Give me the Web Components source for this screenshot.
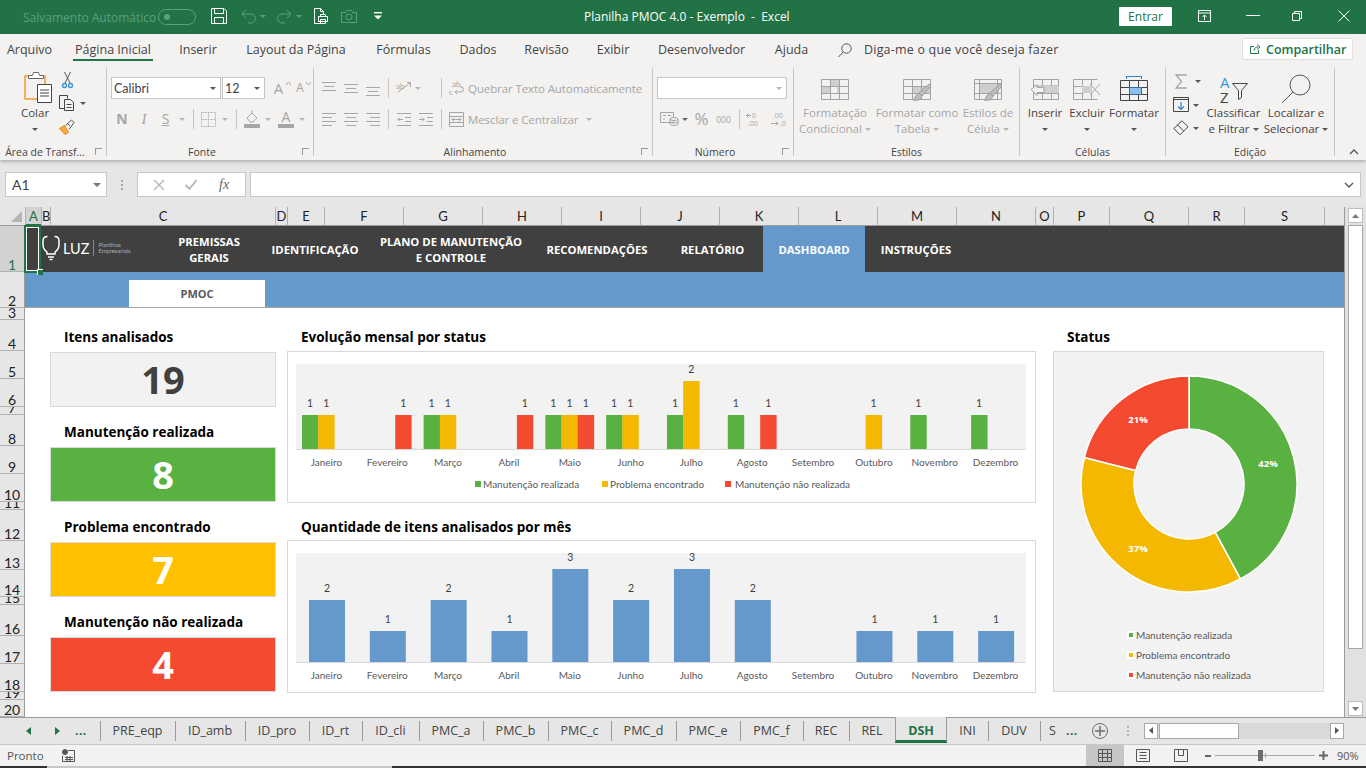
<!DOCTYPE html>
<html lang="pt-BR">
<head>
<meta charset="utf-8">
<title>Planilha PMOC 4.0 - Exemplo - Excel</title>
<style>
  html, body { margin: 0; height: 100%; overflow: hidden; }
  body {
    display: flex; flex-direction: column; width: 1366px; height: 768px;
    background: #e6e6e6; font-family: "Open Sans", "Liberation Sans", sans-serif; color: #444;
  }
</style>
</head>
<body>
<xl-titlebar></xl-titlebar>
<xl-menu></xl-menu>
<xl-ribbon></xl-ribbon>
<xl-formula></xl-formula>
<xl-sheet></xl-sheet>
<xl-tabs></xl-tabs>
<xl-status></xl-status>

<script>
const GREEN = '#58b140', YELLOW = '#f4b800', RED = '#f44a30', BLUE = '#6598cb';
const MONTHS = ['Janeiro','Fevereiro','Março','Abril','Maio','Junho','Julho','Agosto','Setembro','Outubro','Novembro','Dezembro'];

// shared bits of the ribbon
const sharedCss = `
  .row { display: flex; align-items: center; }
  .dd { display: inline-block; width: 0; height: 0; border-left: 3px solid transparent; border-right: 3px solid transparent; border-top: 3px solid var(--dd, #777); flex: none; }
  .dim { --dd: #b5b5b5; }
  .sep { width: 1px; height: 20px; background: #c8c6c4; flex: none; }
  svg { display: block; flex: none; overflow: visible; }
`;

function ln(w, h, list, color) {
  const body = list.map(l => `<path d="M${l[0]} ${l[1]}H${l[2]}"/>`).join('');
  return `<svg width="${w}" height="${h}" stroke="${color}" fill="none">${body}</svg>`;
}

class XlTitlebar extends HTMLElement {
  connectedCallback() {
    this.attachShadow({ mode: 'open' });
    this.shadowRoot.innerHTML = `
      <style>
        ${sharedCss}
        :host { display: flex; align-items: center; height: 34px; padding-bottom: 2px; box-sizing: border-box; background: #217346; color: #fff; flex: none; font-size: 12px; }
        .auto { margin: 2px 0 0 23px; width: 130px; color: #5c9f7d; white-space: nowrap; }
        .toggle { margin: 2px 0 0 5px; width: 36px; height: 14px; border: 1px solid #5c9f7d; border-radius: 8px; display: flex; align-items: center; }
        .toggle i { display: block; width: 6px; height: 6px; margin-left: 5px; border-radius: 50%; background: #5c9f7d; }
        .title { margin-left: 202px; width: 197px; white-space: pre; text-align: center; }
        .enter { margin: 1px 0 0 338px; width: 53px; height: 19px; background: #fff; color: #217346; line-height: 20px; text-align: center; border-radius: 1px; }
      </style>
      <span class="auto">Salvamento Automático</span>
      <span class="toggle"><i></i></span>
      <svg style="margin-left:15px" width="16" height="16" fill="none" stroke="#fff"><path d="M.5.5h12.5l2.5 2.500v12.500H.5z"/><path d="M3.500.5v5h9v-5M3.500 15.500v-6h9v6"/></svg>
      <svg style="margin-left:14px" width="15" height="15" fill="none" stroke="#5c9f7d"><path d="M1 5l4-4M1 5l4 4M1 5h9a4.500 4.500 0 0 1 0 9H7"/></svg>
      <span class="dd" style="--dd:#5c9f7d;margin-left:4px"></span>
      <svg style="margin-left:11px" width="15" height="15" fill="none" stroke="#5c9f7d"><path d="M14 5l-4-4M14 5l-4 4M14 5H5a4.500 4.500 0 0 0 0 9h3"/></svg>
      <span class="dd" style="--dd:#5c9f7d;margin-left:4px"></span>
      <svg style="margin-left:12px" width="14" height="16" fill="none" stroke="#fff"><path d="M7 15.500H.5V.5h6l3 3v3M6.500.5v3h3"/><path fill="#217346" d="M4.500 8.500h9v5h-9zM6.500 8.500v-2h5v2M6.500 11.500h5v4h-5z"/></svg>
      <svg style="margin-left:13px" width="16" height="13" fill="none" stroke="#5c9f7d"><path d="M.5 2.500h4l1-2h5l1 2h4v10H.5z"/><circle cx="8" cy="7" r="3"/></svg>
      <svg style="margin-left:17px" width="8" height="8" fill="#fff"><rect width="8" height="1.400" y="0"/><path d="M0 3.500h8L4 7.500z"/></svg>
      <span class="title">Planilha PMOC 4.0 - Exemplo  -  Excel</span>
      <span class="enter">Entrar</span>
      <svg style="margin-left:26px" width="13" height="12" fill="none" stroke="#fff"><path d="M.5.500h12v11H.5zM.5 3h12M6.500 10V5M4.500 7l2-2 2 2"/></svg>
      <svg style="margin-left:35px" width="14" height="2" stroke="#fff"><path d="M0 .5h14"/></svg>
      <svg style="margin-left:32px" width="10" height="10" fill="none" stroke="#fff"><path d="M.5 2.500h7v7h-7zM2.500 2.500v-2h7v7h-2"/></svg>
      <svg style="margin-left:36px" width="12" height="12" stroke="#fff"><path d="M.5.500l11 11M11.500.500l-11 11"/></svg>
    `;
  }
}

class XlMenu extends HTMLElement {
  connectedCallback() {
    const tabs = [['Arquivo',0,59],['Página Inicial',14,80,1],['Inserir',15,60],['Layout da Página',12,112],['Fórmulas',13,77],['Dados',3,66],['Revisão',4,63],['Exibir',7,56],['Desenvolvedor',9,103],['Ajuda',12,53]];
    this.attachShadow({ mode: 'open' });
    this.shadowRoot.innerHTML = `
      <style>
        ${sharedCss}
        :host { display: flex; align-items: stretch; height: 33px; background: #f3f2f1; flex: none; font-size: 12.5px; color: #444; }
        .tab { text-align: center; line-height: 32px; white-space: nowrap; height: 27px; box-sizing: border-box; }
        .tab.on { border-bottom: 2px solid #217346; }
        .ask { margin-left: 12px; line-height: 32px; white-space: nowrap; letter-spacing: .2px; }
        .share { margin-left: auto; margin-right: 13px; margin-top: 4px; width: 111px; height: 22px; background: #fff; border: 1px solid #e1dfdd; border-radius: 2px; box-sizing: border-box; display: flex; align-items: center; color: #217346; font-weight: 600; font-size: 12.5px; }
        .share svg { margin: 0 5px 0 7px; }
      </style>
      ${tabs.map(t => `<span class="tab ${t[3] ? 'on' : ''}" style="margin-left:${t[1]}px;width:${t[2]}px">${t[0]}</span>`).join('')}
      <svg style="margin:9px 0 0 20px" width="14" height="15" fill="none" stroke="#555"><circle cx="8.500" cy="5.500" r="4.700"/><path d="M5 9l-4.500 5"/></svg>
      <span class="ask">Diga-me o que você deseja fazer</span>
      <span class="share">
        <svg width="11" height="10" viewBox="0 0 11 10" fill="none" stroke="#217346"><path d="M4 2.500H.5v7h8V6M4 6.500c0-2.500 2-3.500 4-3.500M7 .5l3 2.500-3 2.500"/></svg>
        Compartilhar
      </span>
    `;
  }
}

class XlRibbonGroup extends HTMLElement {
  connectedCallback() {
    const launcher = this.hasAttribute('launcher');
    this.attachShadow({ mode: 'open' });
    this.shadowRoot.innerHTML = `
      <style>
        :host { display: flex; flex: none; height: 93px; box-sizing: border-box; position: relative; }
        .in { flex: 1; min-width: 0; display: flex; flex-direction: column; }
        .body { flex: 1; min-height: 0; }
        .foot { height: 19px; line-height: 22px; font-size: 10.500px; color: #444; text-align: center; padding-right: ${launcher ? 16 : 0}px; display: flex; justify-content: center; white-space: nowrap; box-sizing: border-box; }
        .line { width: 1px; background: #c8c6c4; margin: 1px 0 4px; flex: none; }
        .launch { position: absolute; right: 5px; bottom: 5px; width: 7px; height: 7px; border-left: 1px solid #9a9a9a; border-top: 1px solid #9a9a9a; box-sizing: border-box; }
      </style>
      <div class="in"><div class="body"><slot></slot></div><div class="foot">${this.getAttribute('label')}</div></div>
      ${launcher ? '<span class="launch"></span>' : ''}
      <div class="line"></div>
    `;
    this.style.width = this.getAttribute('w') + 'px';
  }
}

class XlBigBtn extends HTMLElement {
  connectedCallback() {
    const dim = this.hasAttribute('dim');
    const color = dim ? '#a6a6a6' : '#444';
    const l2 = this.getAttribute('l2') || '';
    this.attachShadow({ mode: 'open' });
    this.shadowRoot.innerHTML = `
      <style>
        :host { display: flex; flex-direction: column; align-items: center; flex: none; font-size: 11.500px; color: ${color}; --dd: ${dim ? '#b5b5b5' : '#555'}; white-space: nowrap; }
        .ico { height: 33px; padding-top: 5px; display: flex; align-items: center; justify-content: center; }
        .t { height: 16px; line-height: 16px; display: flex; align-items: center; justify-content: center; }
        .dd { display: inline-block; width: 0; height: 0; border-left: 3px solid transparent; border-right: 3px solid transparent; border-top: 3px solid var(--dd); margin-left: ${l2 ? 3 : 0}px; }
      </style>
      <div class="ico"><slot></slot></div>
      <div class="t">${this.getAttribute('l1')}</div>
      <div class="t">${l2}<span class="dd"></span></div>
    `;
  }
}

class XlRibbon extends HTMLElement {
  connectedCallback() {
    const g = '#a6a6a6';
    const tbl = (body, s) => `<svg width="30" height="24" viewBox="0 0 30 24" fill="none" stroke="${s || '#a3a3a3'}">${body}</svg>`;
    const grid = `<path d="M1.500 2.500h27v20h-27zM1.500 9.500h27M1.500 16.500h27M10.500 2.500v20M19.500 2.500v20"/>`;
    const brush = `<path fill="#bdbdbd" stroke="#9e9e9e" d="M27 7l2 2-9 10-3-3zM17 16l3 3c-1 4-5 5-9 4 2-2 3-6 6-7z"/>`;
    this.attachShadow({ mode: 'open' });
    this.shadowRoot.innerHTML = `
      <style>
        ${sharedCss}
        :host { display: flex; height: 93px; background: #f3f2f1; flex: none; box-shadow: 0 2px 3px rgba(0,0,0,.22); position: relative; font-size: 11.500px; color: #a6a6a6; }
        .select { background: #fff; border: 1px solid #c6c6c6; height: 22px; box-sizing: border-box; display: flex; align-items: center; color: #444; font-family: Lato, "Open Sans", sans-serif; font-size: 12.5px; flex: none; }
        .select span { flex: 1; padding-left: 2px; }
        .select .dd { flex: none; margin-right: 4px; --dd: #555; }
        .r1 { padding-top: 10px; height: 22px; }
        .r2 { margin-top: 10px; height: 20px; }
        .g { color: #a6a6a6; white-space: nowrap; letter-spacing: -.1px; }
        .glyph { flex: none; text-align: center; line-height: 20px; font-weight: 700; font-size: 14px; color: #a6a6a6; }
        .col { display: flex; flex-direction: column; flex: none; }
        .chev { position: absolute; right: 7px; bottom: 5px; }
        .mini { display: flex; align-items: center; height: 24px; }
      </style>

      <xl-ribbon-group w="107" label="Área de Transf..." launcher>
        <div class="row" style="align-items:flex-start">
          <xl-big-btn l1="Colar" style="width:50px;margin-left:10px">
            <svg style="margin:-3px 0 0 6px" width="28" height="31" fill="none"><path stroke="#f0a030" stroke-width="1.500" d="M5 4H1v23h13"/><path stroke="#f0a030" stroke-width="1.500" d="M17 4h4v8"/><path fill="#fff" stroke="#666" d="M4.500 6.500h15v-3h-4l-1-3h-5l-1 3h-4z"/><path fill="#fff" stroke="#444" d="M13.500 12.500h14v18h-14z"/><path stroke="#444" d="M16 18h9M16 21h9M16 24h9"/></svg>
          </xl-big-btn>
          <div class="col" style="margin:2px 0 0 -1px">
            <div class="mini" style="height:22px">
              <svg style="margin-left:3px" width="11" height="17" fill="none" stroke="#555"><path d="M2.500 0l5.500 11M8.500 0L3 11"/><circle cx="2.500" cy="13.500" r="2" stroke="#3d8fd6" stroke-width="1.300"/><circle cx="8.500" cy="13.500" r="2" stroke="#3d8fd6" stroke-width="1.300"/></svg>
            </div>
            <div class="mini" style="height:24px">
              <svg width="16" height="16" fill="none" stroke="#444"><path d="M5.500 13.500H.5V.5h8v3"/><path fill="#f3f2f1" d="M5.500 4.500h6l3 3v8h-9z"/><path d="M7.500 9.500h5M7.500 12.500h5"/></svg>
              <span class="dd" style="margin-left:5px;--dd:#555"></span>
            </div>
            <div class="mini" style="height:24px">
              <svg width="16" height="16" fill="none"><path fill="#f7a940" stroke="#e08a20" d="M.5 9.500l5-3 4 7-3.500 2z"/><path stroke="#555" d="M6.500 6.500l6-5.500 2.500 2.500-5 7M8 4l3 3"/></svg>
            </div>
          </div>
        </div>
      </xl-ribbon-group>

      <xl-ribbon-group w="207" label="Fonte" launcher>
        <div class="row r1" style="padding-left:4px">
          <div class="select" style="width:110px"><span>Calibri</span><i class="dd"></i></div>
          <div class="select" style="width:43px;margin-left:1px"><span>12</span><i class="dd"></i></div>
          <span class="glyph" style="width:15px;margin-left:6px;font-weight:400;font-size:15px;line-height:22px">A</span>
          <svg width="5" height="22"><path d="M0 8l2.500-3 2.500 3" fill="none" stroke="#a6a6a6"/></svg>
          <span class="glyph" style="width:12px;margin-left:3px;font-weight:400;font-size:12px;line-height:22px">A</span>
          <svg width="5" height="22"><path d="M0 5l2.500 3 2.500-3" fill="none" stroke="#a6a6a6"/></svg>
        </div>
        <div class="row r2 dim">
          <span class="glyph" style="width:12px;margin-left:9px">N</span>
          <span class="glyph" style="width:8px;margin-left:12px;font-family:'Liberation Serif',serif;font-style:italic;font-weight:400;font-size:15px">I</span>
          <span class="glyph" style="width:9px;margin-left:13px;font-weight:400;text-decoration:underline">S</span>
          <span class="dd" style="margin-left:9px"></span>
          <span class="sep" style="margin-left:8px"></span>
          <svg style="margin-left:7px" width="15" height="15" fill="none" stroke="#b5b5b5" stroke-dasharray="2 1"><path d="M.5.5h14v14H.5zM7.500.5v14M.5 7.500h14"/></svg>
          <span class="dd" style="margin-left:6px"></span>
          <span class="sep" style="margin-left:8px"></span>
          <svg style="margin-left:7px" width="16" height="18" fill="none" stroke="#a6a6a6"><path d="M3 8l5-5 5 5-4 4H6zM8 3V.5"/><path stroke="none" fill="#a6a6a6" d="M0 14h16v4H0z"/></svg>
          <span class="dd" style="margin-left:5px"></span>
          <div class="col" style="margin-left:7px;width:16px;align-items:center">
            <span style="font-size:14px;line-height:14px;color:#a6a6a6">A</span>
            <span style="display:block;width:16px;height:4px;background:#a6a6a6"></span>
          </div>
          <span class="dd" style="margin-left:5px"></span>
        </div>
      </xl-ribbon-group>

      <xl-ribbon-group w="339" label="Alinhamento" launcher>
        <div class="row r1" style="padding-top:10px">
          <span style="margin-left:8px">${ln(14,16,[[0,2.5,14],[2,6.5,12],[0,10.5,14]],g)}</span>
          <span style="margin-left:8px">${ln(14,16,[[0,4.5,14],[2,8.5,12],[0,12.5,14]],g)}</span>
          <span style="margin-left:8px">${ln(14,16,[[0,7.5,14],[2,11.5,12],[0,15.5,14]],g)}</span>
          <span class="sep" style="margin-left:8px"></span>
          <svg style="margin-left:7px" width="15" height="16" fill="none" stroke="#a6a6a6"><path d="M2 12l12-9M11 2.500h3.500V7"/><text x="0" y="9" font-size="8" fill="#a6a6a6" stroke="none" font-family="Lato">ab</text></svg>
          <span class="dd dim" style="margin-left:4px"></span>
          <span class="sep" style="margin-left:20px"></span>
          <svg style="margin-left:7px" width="16" height="16" fill="none" stroke="#a6a6a6"><text x="3" y="7" font-size="8" fill="#a6a6a6" stroke="none" font-family="Lato">ab</text><text x="0" y="15" font-size="8" fill="#a6a6a6" stroke="none" font-family="Lato">c</text><path d="M6 12h6a2.500 2.500 0 0 0 0-5h-1M6 12l2-2M6 12l2 2"/></svg>
          <span class="g" style="margin-left:3px;width:176px">Quebrar Texto Automaticamente</span>
        </div>
        <div class="row r2">
          <span style="margin-left:8px">${ln(14,14,[[0,1.5,14],[0,5.5,10],[0,9.5,14],[0,13.5,10]],g)}</span>
          <span style="margin-left:8px">${ln(14,14,[[0,1.5,14],[2,5.5,12],[0,9.5,14],[2,13.5,12]],g)}</span>
          <span style="margin-left:8px">${ln(14,14,[[0,1.5,14],[4,5.5,14],[0,9.5,14],[4,13.5,14]],g)}</span>
          <span class="sep" style="margin-left:8px"></span>
          <svg style="margin-left:8px" width="14" height="14" fill="none" stroke="#a6a6a6"><path d="M0 1.500h14M8 5.500h6M8 9.500h6M0 13.500h14M6 7.500H1M3 5.500l-2 2 2 2"/></svg>
          <svg style="margin-left:8px" width="14" height="14" fill="none" stroke="#a6a6a6"><path d="M0 1.500h14M8 5.500h6M8 9.500h6M0 13.500h14M0 7.500h5M3 5.500l2 2-2 2"/></svg>
          <span class="sep" style="margin-left:8px"></span>
          <svg style="margin-left:7px" width="15" height="15" fill="none" stroke="#a6a6a6"><path d="M.5.500h14v14H.5zM.5 4.500h14M.5 10.500h14M3 7.500h9M5 5.500l-2 2 2 2M10 5.500l2 2-2 2"/></svg>
          <span class="g" style="margin-left:4px;width:115px">Mesclar e Centralizar</span>
          <span class="dd dim" style="margin-left:3px"></span>
        </div>
      </xl-ribbon-group>

      <xl-ribbon-group w="141" label="Número" launcher>
        <div class="row r1">
          <div class="select" style="width:130px;margin-left:4px"><span></span><i class="dd" style="--dd:#b5b5b5"></i></div>
        </div>
        <div class="row r2">
          <svg style="margin-left:7px" width="19" height="14" fill="none" stroke="#a6a6a6"><path d="M.5.500h13v10H.5zM3 3.500h3M3 7h2M8 3.500h3"/><ellipse cx="14" cy="7" rx="4" ry="1.500" fill="#f3f2f1"/><path d="M10 7v5c0 2 8 2 8 0V7M10 9.500c0 2 8 2 8 0"/></svg>
          <span class="dd" style="margin-left:3px;--dd:#666"></span>
          <span style="margin-left:6px;width:15px;font-size:17px;line-height:20px;color:#a6a6a6;text-align:center;flex:none">%</span>
          <span style="margin-left:7px;width:15px;font-size:8.500px;color:#a6a6a6;text-align:center;flex:none">000</span>
          <span class="sep" style="margin-left:8px"></span>
          <svg style="margin-left:6px" width="15" height="15"><text x="6" y="6" font-size="7" fill="#a6a6a6" font-family="Open Sans">0</text><text x="2" y="14" font-size="7" fill="#a6a6a6" font-family="Open Sans">.00</text><path d="M5 3.500H.5M2.500 1.500l-2 2 2 2" fill="none" stroke="#a6a6a6"/></svg>
          <svg style="margin-left:9px" width="15" height="15"><text x="3" y="6" font-size="7" fill="#a6a6a6" font-family="Open Sans">.00</text><text x="10" y="14" font-size="7" fill="#a6a6a6" font-family="Open Sans">.0</text><path d="M1 11.500h7M6 9.500l2 2-2 2" fill="none" stroke="#a6a6a6"/></svg>
        </div>
      </xl-ribbon-group>

      <xl-ribbon-group w="226" label="Estilos">
        <div class="row" style="align-items:flex-start">
          <xl-big-btn dim l1="Formatação" l2="Condicional" style="width:72px;margin-left:5px">
            ${tbl(`<path fill="#cfcfcf" stroke="none" d="M10 2h9v7h-9zM1 9h9v7H1zM19 9h-2v7h2z"/>${grid}`)}
          </xl-big-btn>
          <xl-big-btn dim l1="Formatar como" l2="Tabela" style="width:82px;margin-left:5px">
            ${tbl(`<path fill="#cfcfcf" stroke="none" d="M10 9h18v7H10z"/>${grid}${brush}`)}
          </xl-big-btn>
          <xl-big-btn dim l1="Estilos de" l2="Célula" style="width:48px;margin-left:6px">
            ${tbl(`<path fill="#cfcfcf" stroke="none" d="M6 6h20v11H6z"/><path d="M1.500 2.500h27v20h-27z"/><path d="M1.500 6.500h27M1.500 16.500h27M6.500 2.500v20M24.500 2.500v20"/>${brush}`)}
          </xl-big-btn>
        </div>
      </xl-ribbon-group>

      <xl-ribbon-group w="146" label="Células">
        <div class="row" style="align-items:flex-start;font-size:11.500px">
          <xl-big-btn l1="Inserir" style="width:50px">
            ${tbl(`<path d="M3.500 2.500h25v20h-25zM3.500 16.500h25M12.500 2.500v20M21.500 2.500v20M3.500 9h25" /><path fill="#cfcfcf" stroke="none" d="M12 9h17v7H12z"/><path fill="#f3f2f1" stroke="#a3a3a3" d="M1 12.500l6-5v3h7v5H7v3z"/>`)}
          </xl-big-btn>
          <xl-big-btn l1="Excluir" style="width:34px">
            ${tbl(`<path d="M1.500 2.500h24M1.500 22.500h24M1.500 2.500v20M1.500 9.500h10M1.500 16.500h10M10.500 2.500v20M19.500 2.500v6M19.500 16.500v6"/><path fill="#cfcfcf" stroke="none" d="M10 9h10v7H10z"/><path d="M18 7l10 11M28 7L18 18"/>`)}
          </xl-big-btn>
          <xl-big-btn l1="Formatar" style="width:60px">
            <svg width="30" height="26" viewBox="0 0 30 26" fill="none" stroke="#444"><path stroke="#2f83c9" d="M7.500 .5h15M7.500 0v3M22.500 0v3"/><path d="M1.500 4.500h27v20h-27zM1.500 11.500h27M1.500 18.500h27M10.500 4.500v20M19.500 4.500v20"/><path fill="#8fc0ea" stroke="#2f6fad" d="M10.500 11.500h12v7h-12z"/></svg>
          </xl-big-btn>
        </div>
      </xl-ribbon-group>

      <xl-ribbon-group w="169" label="Edição">
        <div class="row" style="align-items:flex-start">
          <div class="col" style="margin:2px 0 0 7px;width:27px">
            <div class="mini" style="height:24px;--dd:#555">
              <svg style="margin-left:2px" width="12" height="15" fill="none" stroke="#a6a6a6" stroke-width="1.300"><path d="M12 1H1l5.500 6.500L1 14h11"/></svg>
              <span class="dd" style="margin-left:8px"></span>
            </div>
            <div class="mini" style="height:24px;--dd:#555">
              <svg width="16" height="16" fill="none" stroke="#444"><path d="M.5.500h15v14H.5zM.5 2.500h15"/><path stroke="#2f83c9" stroke-width="1.200" d="M8 5v7M5 9.500l3 3 3-3"/></svg>
              <span class="dd" style="margin-left:4px"></span>
            </div>
            <div class="mini" style="height:22px;--dd:#555">
              <svg width="16" height="16" fill="none" stroke="#444"><path d="M.8 8.500L9 .8l6 6L7 14.800zM4.500 4.800l6 6"/></svg>
              <span class="dd" style="margin-left:4px"></span>
            </div>
          </div>
          <xl-big-btn l1="Classificar" l2="e Filtrar" style="width:61px;margin-left:3px">
            <svg width="30" height="30" fill="none"><text x="1" y="14" font-size="15" fill="#3e95dc" font-family="Open Sans">A</text><text x="1" y="29" font-size="15" fill="#444" font-family="Open Sans">Z</text><path stroke="#444" d="M13.500 9.500h15l-6 7v7l-3 2v-9z"/></svg>
          </xl-big-btn>
          <xl-big-btn l1="Localizar e" l2="Selecionar" style="width:64px">
            <svg width="30" height="30" fill="none" stroke="#555"><circle cx="19" cy="11" r="10"/><path d="M12 18L1 29"/></svg>
          </xl-big-btn>
        </div>
      </xl-ribbon-group>

      <svg class="chev" width="10" height="6" fill="none" stroke="#555" stroke-width="1.300"><path d="M1 5l4-4 4 4"/></svg>
    `;
  }
}

class XlFormula extends HTMLElement {
  connectedCallback() {
    this.attachShadow({ mode: 'open' });
    this.shadowRoot.innerHTML = `
      <style>
        ${sharedCss}
        :host { display: flex; height: 25px; margin-top: 12px; margin-bottom: 10px; flex: none; align-items: stretch; }
        .box { background: #fff; border: 1px solid #c6c6c6; box-sizing: border-box; display: flex; align-items: center; flex: none; }
        .name { margin-left: 5px; width: 102px; font-family: Lato, sans-serif; font-size: 14px; color: #444; padding-left: 6px; }
        .name span { flex: 1; }
        .name .dd { margin-right: 5px; border-width: 4px 4px 0; --dd: #777; }
        .dots { width: 30px; display: flex; flex-direction: column; align-items: center; justify-content: center; gap: 2px; flex: none; }
        .dots i { display: block; width: 2px; height: 2px; background: #a6a6a6; }
        .fx { width: 109px; justify-content: space-around; padding: 0 5px; }
        .fn { font: italic 14px "Liberation Serif", serif; color: #666; }
        .input { margin-left: 4px; width: 1111px; justify-content: flex-end; padding-right: 6px; }
      </style>
      <div class="box name"><span>A1</span><i class="dd"></i></div>
      <div class="dots"><i></i><i></i><i></i></div>
      <div class="box fx">
        <svg width="10" height="10" stroke="#b5b5b5" stroke-width="1.400"><path d="M0 0l10 10M10 0L0 10"/></svg>
        <svg width="12" height="10" fill="none" stroke="#b5b5b5" stroke-width="1.800"><path d="M.5 5l4 4 7-9"/></svg>
        <span class="fn">fx</span>
      </div>
      <div class="box input">
        <svg width="10" height="6" fill="none" stroke="#555" stroke-width="1.300"><path d="M1 1l4 4 4-4"/></svg>
      </div>
    `;
  }
}

class XlKpi extends HTMLElement {
  connectedCallback() {
    const bg = this.getAttribute('bg') || '#f2f2f2';
    const fg = this.getAttribute('fg') || '#fff';
    this.attachShadow({ mode: 'open' });
    this.shadowRoot.innerHTML = `
      <style>
        :host { display: flex; align-items: center; justify-content: center; margin: 1px -1px 0 0; padding-bottom: 2px; background: ${bg}; border: 1px solid #d9d9d9; box-sizing: border-box; color: ${fg}; font: 700 38px/1 "Open Sans", sans-serif; min-height: 0; overflow: hidden; }
      </style>
      <slot></slot>
    `;
  }
}

class XlHeading extends HTMLElement {
  connectedCallback() {
    this.attachShadow({ mode: 'open' });
    this.shadowRoot.innerHTML = `
      <style>
        :host { display: flex; align-items: center; padding: 3px 0 0 14px; font: 700 13.500px "Open Sans", sans-serif; color: #000; white-space: nowrap; overflow: visible; min-width: 0; }
      </style>
      <slot></slot>
    `;
  }
}

class XlStatusChart extends HTMLElement {
  connectedCallback() {
    const series = [[1,1,0],[0,0,1],[1,1,0],[0,0,1],[1,1,1],[1,1,0],[1,2,0],[1,0,1],[0,0,0],[0,1,0],[1,0,0],[1,0,0]];
    const colors = [GREEN, YELLOW, RED];
    const step = 60.83;
    let bars = '', labels = '';
    series.forEach((vals, i) => {
      vals.forEach((v, s) => {
        if (!v) return;
        const x = 302 + step * i + 16.2 * s, h = 34 * v, y = 449 - h;
        bars += `<rect x="${x}" y="${y}" width="16.4" height="${h}" fill="${colors[s]}"/>`;
        labels += `<text class="v" x="${x + 8}" y="${y - 8.5}">${v}</text>`;
      });
      labels += `<text class="c" x="${296 + step * (i + .5)}" y="465.500">${MONTHS[i]}</text>`;
    });
    this.attachShadow({ mode: 'open' });
    this.shadowRoot.innerHTML = `
      <style>
        :host { display: block; margin: 0 -1px -1px 0; background: #fff; border: 1px solid #d9d9d9; box-sizing: border-box; min-height: 0; overflow: hidden; }
        svg { display: block; }
        text { font: 10px Lato, sans-serif; fill: #595959; text-anchor: middle; }
        .v { font-size: 10.500px; fill: #404040; }
        .l { text-anchor: start; }
      </style>
      <svg width="747" height="150" viewBox="288 352 747 150">
        <rect x="296" y="364" width="730" height="85" fill="#f2f2f2"/>
        <path d="M296 449.500h730" stroke="#d9d9d9"/>
        ${bars}${labels}
        <rect x="475" y="481" width="6" height="6" fill="${GREEN}"/><text class="c l" x="483" y="487.500">Manutenção realizada</text>
        <rect x="602" y="481" width="6" height="6" fill="${YELLOW}"/><text class="c l" x="610" y="487.500">Problema encontrado</text>
        <rect x="725" y="481" width="6" height="6" fill="${RED}"/><text class="c l" x="735" y="487.500">Manutenção não realizada</text>
      </svg>
    `;
  }
}

class XlCountChart extends HTMLElement {
  connectedCallback() {
    const vals = [2,1,2,1,3,2,3,2,0,1,1,1];
    const step = 60.83;
    let out = '';
    vals.forEach((v, i) => {
      if (v) {
        const x = 309 + step * i, h = 31 * v, y = 662 - h;
        out += `<rect x="${x}" y="${y}" width="36" height="${h}" fill="${BLUE}"/>`;
        out += `<text class="v" x="${x + 18}" y="${y - 8.5}">${v}</text>`;
      }
      out += `<text x="${296 + step * (i + .5)}" y="678.500">${MONTHS[i]}</text>`;
    });
    this.attachShadow({ mode: 'open' });
    this.shadowRoot.innerHTML = `
      <style>
        :host { display: block; margin: -1px -1px -1px 0; background: #fff; border: 1px solid #d9d9d9; box-sizing: border-box; min-height: 0; overflow: hidden; }
        svg { display: block; }
        text { font: 10px Lato, sans-serif; fill: #595959; text-anchor: middle; }
        .v { font-size: 10.500px; fill: #404040; }
      </style>
      <svg width="747" height="151" viewBox="288 541 747 151">
        <rect x="296" y="553" width="730" height="109" fill="#f2f2f2"/>
        <path d="M296 662.500h730" stroke="#d9d9d9"/>
        ${out}
      </svg>
    `;
  }
}

class XlDonut extends HTMLElement {
  connectedCallback() {
    const cx = 135, cy = 132, R = 108, r = 55;
    const parts = [[8, GREEN], [7, YELLOW], [4, RED]];
    let a = -Math.PI / 2, arcs = '';
    const p = (rad, t) => `${(cx + rad * Math.cos(t)).toFixed(2)} ${(cy + rad * Math.sin(t)).toFixed(2)}`;
    parts.forEach(([n, c]) => {
      const b = a + n / 19 * Math.PI * 2, big = n / 19 > .5 ? 1 : 0;
      arcs += `<path d="M${p(R, a)}A${R} ${R} 0 ${big} 1 ${p(R, b)}L${p(r, b)}A${r} ${r} 0 ${big} 0 ${p(r, a)}Z" fill="${c}" stroke="#fff" stroke-width="1.500"/>`;
      a = b;
    });
    const legend = [['Manutenção realizada', GREEN], ['Problema encontrado', YELLOW], ['Manutenção não realizada', RED]];
    this.attachShadow({ mode: 'open' });
    this.shadowRoot.innerHTML = `
      <style>
        :host { display: flex; flex-direction: column; background: #f2f2f2; border: 1px solid #d9d9d9; box-sizing: border-box; min-height: 0; overflow: hidden; }
        svg { display: block; margin-top: 0; flex: none; }
        svg text { font: 700 9.500px "Open Sans", sans-serif; fill: #fff; text-anchor: middle; }
        ul { list-style: none; margin: 0; padding: 0 0 0 73px; display: flex; flex-direction: column; gap: 0; }
        li { display: flex; align-items: center; height: 20px; font: 10px Lato, sans-serif; color: #595959; white-space: nowrap; }
        li i { display: block; width: 4px; height: 4px; border: 2px solid #fff; margin-right: 1px; flex: none; }
      </style>
      <svg width="269" height="273" viewBox="0 0 269 273">
        ${arcs}
        <text x="214" y="114.500">42%</text>
        <text x="84" y="199.500">37%</text>
        <text x="84" y="70.500">21%</text>
      </svg>
      <ul>${legend.map(l => `<li><i style="background:${l[1]}"></i>${l[0]}</li>`).join('')}</ul>
    `;
  }
}

class XlNavbar extends HTMLElement {
  connectedCallback() {
    const items = [
      ['PREMISSAS<br>GERAIS', 118], ['IDENTIFICAÇÃO', 94], ['PLANO DE MANUTENÇÃO<br>E CONTROLE', 178],
      ['RECOMENDAÇÕES', 114], ['RELATÓRIO', 109, 8], ['DASHBOARD', 102, 0, 1], ['INSTRUÇÕES', 102]
    ];
    this.attachShadow({ mode: 'open' });
    this.shadowRoot.innerHTML = `
      <style>
        :host { display: flex; background: #404040; color: #fff; font: 700 11.300px/16px "Open Sans", sans-serif; overflow: hidden; }
        .logo { width: 125px; flex: none; display: flex; align-items: center; box-sizing: border-box; padding: 0 0 2px 17px; }
        .luz { font: 400 14.500px Lato, sans-serif; margin-left: 3px; }
        .bar { width: 1px; height: 16px; background: #8a8a8a; margin: 0 4px 0 4px; }
        .sub { font: 5.800px/6.500px Lato, sans-serif; color: #b0b0b0; }
        .it { flex: none; display: flex; align-items: center; justify-content: center; text-align: center; box-sizing: border-box; white-space: nowrap; padding-top: 2px; }
        .on { background: ${BLUE}; }
      </style>
      <div class="logo">
        <svg width="18" height="26" viewBox="0 0 18 26" fill="none" stroke="#fff" stroke-width="1.500"><path d="M5.500 1.500C2.500 1.500 1 3 1 6v4c0 3.500 2 5.500 4 7v2h8v-2c2-1.500 4-3.500 4-7V6c0-3-1.500-4.500-4.500-4.500"/><path d="M6 22h6M7.500 24.500h3"/></svg>
        <span class="luz">LUZ</span><span class="bar"></span>
        <span class="sub">Planilhas<br>Empresariais</span>
      </div>
      ${items.map(i => `<div class="it ${i[3] ? 'on' : ''}" style="width:${i[1]}px;padding-left:${i[2] || 0}px">${i[0]}</div>`).join('')}
    `;
  }
}

class XlSheet extends HTMLElement {
  connectedCallback() {
    const cols = [['A',16],['B',9],['C',225],['D',12],['E',37],['F',79],['G',79],['H',79],['I',79],['J',79],['K',79],['L',79],['M',79],['N',79],['O',18],['P',56],['Q',79],['R',56],['S',80],['',20]];
    const rows = [46,36,12,31,28,28,8,31,28,28,8,31,29,27,8,31,28,28,8,17];
    const colTrack = cols.map(c => c[1] + 'px').join(' ');
    const rowTrack = rows.map(r => r + 'px').join(' ');
    const colHead = cols.map((c, i) => `<div class="ch ${i === 0 ? 'sel' : ''}" style="grid-column:${i + 2};grid-row:1">${c[0]}</div>`).join('');
    const rowHead = rows.map((r, i) => `<div class="rh ${i === 0 ? 'sel' : ''}" style="grid-row:${i + 2};grid-column:1">${i + 1}</div>`).join('');
    this.attachShadow({ mode: 'open' });
    this.shadowRoot.innerHTML = `
      <style>
        :host { display: grid; flex: none; grid-template-columns: 25px ${colTrack} 22px; grid-template-rows: 19px ${rowTrack}; height: 510px; width: 1366px; position: relative; }
        .ch, .rh, .corner { background: #e6e6e6; font: 13px/19px Lato, sans-serif; color: #222; box-sizing: border-box; overflow: hidden; }
        .ch { text-align: center; border-left: 1px solid #b0b0b0; border-bottom: 1px solid #9b9b9b; line-height: 19px; }
        .rh { display: flex; justify-content: center; align-items: flex-end; border-right: 1px solid #9b9b9b; border-bottom: 1px solid #b0b0b0; font-size: 14px; line-height: 13px; }
        .sel { background: #d2d2d2; color: #217346; }
        .ch.sel { border-bottom: 2px solid #217346; }
        .rh.sel { color: #217346; }
        .corner { grid-column: 1; grid-row: 1; display: flex; align-items: flex-end; justify-content: flex-end; padding: 0 3px 3px 0; border-bottom: 1px solid #9b9b9b; }
        .paper { grid-column: 2 / 22; grid-row: 2 / 22; background: #fff; }
        xl-navbar { grid-column: 2 / 22; grid-row: 2; }
        .blue { grid-column: 2 / 22; grid-row: 3; background: ${BLUE}; border-bottom: 1px solid #a5a5a5; box-sizing: border-box; display: flex; align-items: flex-end; padding-left: 104px; }
        .pmoc { width: 136px; height: 27px; background: #fff; color: #595959; font: 700 11px/27px "Open Sans", sans-serif; text-align: center; }
        .cursor { position: absolute; left: 24px; top: 18px; width: 17px; height: 48px; box-sizing: border-box; border: 2px solid #217346; pointer-events: none; }
        .cursor::before { content: ''; position: absolute; inset: 0; border: 1px solid #fff; }
        .cursor i { position: absolute; right: -4px; bottom: -4px; width: 6px; height: 6px; background: #217346; border: 1px solid #fff; border-width: 1px 0 0 1px; box-sizing: border-box; }
        .vbar { grid-column: 22; grid-row: 1 / 22; background: #e1e1e1; border-left: 1px solid #9b9b9b; box-sizing: border-box; display: flex; flex-direction: column; align-items: center; padding: 1px 1px 1px 0; }
        .vbar .btn { width: 15px; height: 15px; background: #fff; border: 1px solid #bdbdbd; box-sizing: border-box; display: flex; align-items: center; justify-content: center; flex: none; }
        .vbar .thumb { width: 15px; height: 424px; margin-top: 2px; background: #fff; border: 1px solid #a8a8a8; box-sizing: border-box; flex: none; }
        .vbar .btn.down { margin-top: auto; }
        .vbar svg { display: block; }
      </style>
      <div class="corner"><svg width="11" height="11"><path d="M11 0v11H0z" fill="#b5b5b5"/></svg></div>
      ${colHead}${rowHead}
      <div class="paper"></div>
      <xl-navbar></xl-navbar>
      <div class="blue"><div class="pmoc">PMOC</div></div>

      <xl-heading style="grid-column:4;grid-row:5">Itens analisados</xl-heading>
      <xl-kpi fg="#404040" style="grid-column:4;grid-row:6 / 8">19</xl-kpi>
      <xl-heading style="grid-column:4;grid-row:9">Manutenção realizada</xl-heading>
      <xl-kpi bg="${GREEN}" style="grid-column:4;grid-row:10 / 12">8</xl-kpi>
      <xl-heading style="grid-column:4;grid-row:13">Problema encontrado</xl-heading>
      <xl-kpi bg="#ffc000" style="grid-column:4;grid-row:14 / 16">7</xl-kpi>
      <xl-heading style="grid-column:4;grid-row:17">Manutenção não realizada</xl-heading>
      <xl-kpi bg="${RED}" style="grid-column:4;grid-row:18 / 20">4</xl-kpi>

      <xl-heading style="grid-column:6 / 16;grid-row:5">Evolução mensal por status</xl-heading>
      <xl-status-chart style="grid-column:6 / 16;grid-row:6 / 12"></xl-status-chart>
      <xl-heading style="grid-column:6 / 16;grid-row:13">Quantidade de itens analisados por mês</xl-heading>
      <xl-count-chart style="grid-column:6 / 16;grid-row:14 / 20"></xl-count-chart>

      <xl-heading style="grid-column:17 / 21;grid-row:5">Status</xl-heading>
      <xl-donut style="grid-column:17 / 21;grid-row:6 / 20"></xl-donut>

      <div class="cursor"><i></i></div>
      <div class="vbar">
        <div class="btn"><svg width="7" height="4"><path d="M3.500 0L7 4H0z" fill="#777"/></svg></div>
        <div class="thumb"></div>
        <div class="btn down"><svg width="7" height="4"><path d="M0 0h7L3.500 4z" fill="#777"/></svg></div>
      </div>
    `;
  }
}

class XlTabs extends HTMLElement {
  connectedCallback() {
    const tabs = [['PRE_eqp',75],['ID_amb',70],['ID_pro',64],['ID_rt',53],['ID_cli',57],['PMC_a',64],['PMC_b',65],['PMC_c',63],['PMC_d',65],['PMC_e',64],['PMC_f',63],['REC',46],['REL',46],['DSH',52,1],['INI',41],['DUV',52],['S',25]];
    this.attachShadow({ mode: 'open' });
    this.shadowRoot.innerHTML = `
      <style>
        ${sharedCss}
        :host { display: flex; height: 28px; background: #e6e6e6; border-top: 1px solid #9b9b9b; border-bottom: 1px solid #c8c8c8; box-sizing: border-box; flex: none; align-items: stretch; font-size: 12.5px; color: #444; }
        .nav { width: 100px; flex: none; display: flex; align-items: center; }
        .more { color: #217346; font-weight: 700; font-size: 12px; line-height: 12px; letter-spacing: .5px; }
        .tab { flex: none; box-sizing: border-box; text-align: center; line-height: 26px; position: relative; white-space: nowrap; }
        .tab::before { content: ''; position: absolute; left: 0; top: 3px; height: 20px; width: 1px; background: #9b9b9b; }
        .tab.on { color: #217346; font-weight: 700; background: #e6e6e6; border-left: 1px solid #9b9b9b; border-right: 1px solid #9b9b9b; border-bottom: 3px solid #217346; margin-top: -1px; height: 26px; line-height: 27px; }
        .tab.on::before, .tab.on + .tab::before { display: none; }
        .plus { margin-left: 14px; width: 16px; height: 16px; border: 1px solid #6e6e6e; border-radius: 50%; box-sizing: border-box; flex: none; display: flex; align-items: center; justify-content: center; align-self: center; margin-top: -1px; }
        .dots { margin-left: 19px; display: flex; flex-direction: column; gap: 2px; align-self: center; flex: none; }
        .dots i { display: block; width: 2px; height: 2px; background: #b5b5b5; }
        .hbar { margin-left: 15px; width: 200px; height: 16px; align-self: center; background: #d9d9d9; display: flex; flex: none; margin-top: -1px; }
        .hbar .b { width: 14px; background: #fff; border: 1px solid #a8a8a8; box-sizing: border-box; display: flex; align-items: center; justify-content: center; flex: none; }
        .hbar .t { width: 80px; margin-left: 1px; background: #fff; border: 1px solid #a8a8a8; box-sizing: border-box; flex: none; }
        .hbar .b.r { margin-left: auto; }
      </style>
      <div class="nav">
        <svg style="margin-left:26px" width="5" height="8"><path d="M5 0v8L0 4z" fill="#217346"/></svg>
        <svg style="margin-left:24px" width="5" height="8"><path d="M0 0v8l5-4z" fill="#217346"/></svg>
        <span class="more" style="margin-left:15px;">...</span>
      </div>
      ${tabs.map(t => `<span class="tab ${t[2] ? 'on' : ''}" style="width:${t[1]}px">${t[0]}</span>`).join('')}
      <span class="more" style="align-self:center;margin-left:1px;width:12px">...</span>
      <span class="plus"><svg width="10" height="10" stroke="#6e6e6e" stroke-width="1.500"><path d="M5 0v10M0 5h10"/></svg></span>
      <span class="dots"><i></i><i></i><i></i></span>
      <div class="hbar">
        <div class="b"><svg width="4" height="7"><path d="M4 0v7L0 3.500z" fill="#555"/></svg></div>
        <div class="t"></div>
        <div class="b r"><svg width="4" height="7"><path d="M0 0v7l4-3.500z" fill="#555"/></svg></div>
      </div>
    `;
  }
}

class XlStatus extends HTMLElement {
  connectedCallback() {
    this.attachShadow({ mode: 'open' });
    this.shadowRoot.innerHTML = `
      <style>
        ${sharedCss}
        :host { display: flex; height: 23px; flex: none; background: #f3f2f1; align-items: stretch; box-sizing: border-box; border-bottom: 2px solid; border-image: linear-gradient(90deg, #333 48px, #c8c8c8 48px, #c8c8c8 392px, #333 392px) 1; font-size: 11.500px; color: #555; }
        .txt { margin-left: 7px; width: 36px; line-height: 21px; }
        .view { margin-left: 1011px; width: 38px; background: #c8c6c4; display: flex; align-items: center; justify-content: center; flex: none; }
        .mid { display: flex; align-items: center; }
        .track { width: 100px; height: 1px; background: #a6a6a6; position: relative; margin: 0 4px; flex: none; }
        .track::before { content: ''; position: absolute; left: 43px; top: -5px; width: 5px; height: 11px; background: #6e6e6e; }
        .track::after { content: ''; position: absolute; left: 50px; top: -2px; width: 1px; height: 5px; background: #a6a6a6; }
        .zoom { margin-left: 9px; line-height: 21px; font-size: 11px; }
      </style>
      <span class="txt">Pronto</span>
      <svg style="margin:4px 0 0 19px" width="13" height="13" fill="none" stroke="#555"><circle cx="3" cy="3" r="2.500" fill="#555"/><path d="M6 1.500h6.500v11H.5V6.500"/><path d="M3 8.500h8M3 10.500h8M5 7v5M8 7v5"/></svg>
      <span class="view"><svg width="14" height="13" fill="none" stroke="#555"><path d="M.5.500h13v12H.5zM.5 4.500h13M.5 8.500h13M4.500.500v12M9.500.500v12"/></svg></span>
      <div class="mid" style="margin-left:12px"><svg width="14" height="13" fill="none" stroke="#555"><path d="M.5.500h13v12H.5zM3.500 3.500h7M3.500 6.500h7M3.500 9.500h7"/></svg></div>
      <div class="mid" style="margin-left:24px"><svg width="14" height="13" fill="none" stroke="#555"><path d="M.5.500h13v12H.5zM4.500.500v6h5v-6"/></svg></div>
      <div class="mid" style="margin-left:17px">
        <svg width="6" height="2"><path d="M0 0h6v2H0z" fill="#666"/></svg>
        <span class="track"></span>
        <svg width="9" height="9"><path d="M3.500 0h2v3.500H9v2H5.500V9h-2V5.500H0v-2h3.500z" fill="#666"/></svg>
      </div>
      <span class="zoom">90%</span>
    `;
  }
}

// children first so that parents find them already registered
customElements.define('xl-ribbon-group', XlRibbonGroup);
customElements.define('xl-big-btn', XlBigBtn);
customElements.define('xl-kpi', XlKpi);
customElements.define('xl-heading', XlHeading);
customElements.define('xl-status-chart', XlStatusChart);
customElements.define('xl-count-chart', XlCountChart);
customElements.define('xl-donut', XlDonut);
customElements.define('xl-navbar', XlNavbar);
customElements.define('xl-titlebar', XlTitlebar);
customElements.define('xl-menu', XlMenu);
customElements.define('xl-ribbon', XlRibbon);
customElements.define('xl-formula', XlFormula);
customElements.define('xl-sheet', XlSheet);
customElements.define('xl-tabs', XlTabs);
customElements.define('xl-status', XlStatus);
</script>
</body>
</html>
